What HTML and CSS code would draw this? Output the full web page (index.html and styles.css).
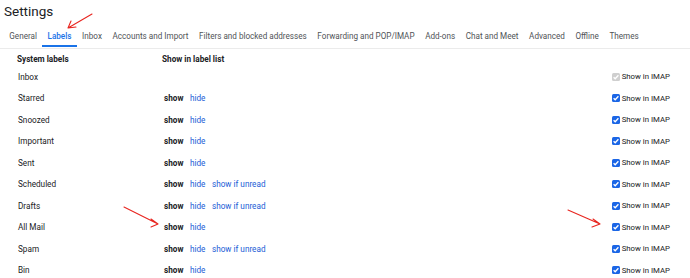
FILE: index.html
```html
<!DOCTYPE html>
<html lang="en">
<head>
  <meta charset="UTF-8" />
  <title>Settings</title>
  <link rel="stylesheet" href="styles.css">
</head>
<body>
  <div class="page">
    <h1 class="title">Settings</h1>

    <nav class="tabs">
      <a class="tab">General</a>
      <a class="tab active">Labels</a>
      <a class="tab">Inbox</a>
      <a class="tab">Accounts and Import</a>
      <a class="tab">Filters and blocked addresses</a>
      <a class="tab">Forwarding and POP/IMAP</a>
      <a class="tab">Add-ons</a>
      <a class="tab">Chat and Meet</a>
      <a class="tab">Advanced</a>
      <a class="tab">Offline</a>
      <a class="tab">Themes</a>
    </nav>

    <div class="labels">
      <div class="labels-head">
        <div class="col-name">System labels</div>
        <div class="col-list">Show in label list</div>
      </div>

      <div class="label-row">
        <div class="col-name">Inbox</div>
        <div class="col-list"></div>
        <label class="imap"><span class="check disabled"><svg viewBox="0 0 8 8"><path d="M1.6 4.2 3.2 5.8 6.4 2.2"/></svg></span>Show in IMAP</label>
      </div>
      <div class="label-row">
        <div class="col-name">Starred</div>
        <div class="col-list"><b>show</b><a>hide</a></div>
        <label class="imap"><span class="check"><svg viewBox="0 0 8 8"><path d="M1.6 4.2 3.2 5.8 6.4 2.2"/></svg></span>Show in IMAP</label>
      </div>
      <div class="label-row">
        <div class="col-name">Snoozed</div>
        <div class="col-list"><b>show</b><a>hide</a></div>
        <label class="imap"><span class="check"><svg viewBox="0 0 8 8"><path d="M1.6 4.2 3.2 5.8 6.4 2.2"/></svg></span>Show in IMAP</label>
      </div>
      <div class="label-row">
        <div class="col-name">Important</div>
        <div class="col-list"><b>show</b><a>hide</a></div>
        <label class="imap"><span class="check"><svg viewBox="0 0 8 8"><path d="M1.6 4.2 3.2 5.8 6.4 2.2"/></svg></span>Show in IMAP</label>
      </div>
      <div class="label-row">
        <div class="col-name">Sent</div>
        <div class="col-list"><b>show</b><a>hide</a></div>
        <label class="imap"><span class="check"><svg viewBox="0 0 8 8"><path d="M1.6 4.2 3.2 5.8 6.4 2.2"/></svg></span>Show in IMAP</label>
      </div>
      <div class="label-row">
        <div class="col-name">Scheduled</div>
        <div class="col-list"><b>show</b><a>hide</a><a>show if unread</a></div>
        <label class="imap"><span class="check"><svg viewBox="0 0 8 8"><path d="M1.6 4.2 3.2 5.8 6.4 2.2"/></svg></span>Show in IMAP</label>
      </div>
      <div class="label-row">
        <div class="col-name">Drafts</div>
        <div class="col-list"><b>show</b><a>hide</a><a>show if unread</a></div>
        <label class="imap"><span class="check"><svg viewBox="0 0 8 8"><path d="M1.6 4.2 3.2 5.8 6.4 2.2"/></svg></span>Show in IMAP</label>
      </div>
      <div class="label-row">
        <div class="col-name">All Mail</div>
        <div class="col-list"><b>show</b><a>hide</a></div>
        <label class="imap"><span class="check"><svg viewBox="0 0 8 8"><path d="M1.6 4.2 3.2 5.8 6.4 2.2"/></svg></span>Show in IMAP</label>
      </div>
      <div class="label-row">
        <div class="col-name">Spam</div>
        <div class="col-list"><b>show</b><a>hide</a><a>show if unread</a></div>
        <label class="imap"><span class="check"><svg viewBox="0 0 8 8"><path d="M1.6 4.2 3.2 5.8 6.4 2.2"/></svg></span>Show in IMAP</label>
      </div>
      <div class="label-row">
        <div class="col-name">Bin</div>
        <div class="col-list"><b>show</b><a>hide</a></div>
        <label class="imap"><span class="check"><svg viewBox="0 0 8 8"><path d="M1.6 4.2 3.2 5.8 6.4 2.2"/></svg></span>Show in IMAP</label>
      </div>
    </div>

    <!-- red annotation arrows drawn over the screenshot -->
    <svg class="marks" viewBox="0 0 690 278">
      <path d="M92 14 L68 28 M68 28 L76 27 M68 28 L71 21"/>
      <path d="M124 207 L158 224 M158 224 L151 219 M158 224 L151 227"/>
      <path d="M568 210 L600 224 M600 224 L593 219 M600 224 L592 227"/>
    </svg>
  </div>
</body>
</html>
```

FILE: styles.css
```css
html, body {
  margin: 0;
  background: #fff;
  color: #202124;
  font-family: Roboto, 'Liberation Sans', sans-serif;
}

.page {
  position: relative;
  width: 690px;
  height: 278px;
  overflow: hidden;
}

.title {
  margin: 0;
  padding: 2px 0 0 4px;
  height: 22px;
  font-size: 13.5px;
  font-weight: 400;
  line-height: 18px;
}

.tabs {
  display: flex;
  padding-left: 4px;
  border-bottom: 1px solid #ebebeb;
  height: 24px;
}

.tab {
  display: flex;
  align-items: center;
  padding: 2px 5.3px 0;
  font-size: 8.15px;
  color: #4f5357;
  border-bottom: 2px solid transparent;
  margin-bottom: 1px;
  white-space: nowrap;
}

.tab.active {
  color: #1a73e8;
  font-weight: 500;
  border-bottom-color: #1a73e8;
}

.labels {
  padding: 3px 20px 0 17px;
  font-size: 8.2px;
}

.labels-head {
  display: flex;
  height: 14px;
  align-items: center;
  font-weight: 700;
}

.label-row {
  display: flex;
  align-items: center;
  height: 21.5px;
}

.col-name {
  width: 145px;
}

.label-row .col-name {
  padding-left: 1px;
  width: 144px;
}

.col-list {
  flex: 1;
  display: flex;
  gap: 6.5px;
}

.label-row .col-list {
  padding-left: 2px;
}

.col-list b {
  font-weight: 700;
}

.col-list a {
  color: #1a5bd6;
}

.imap {
  display: flex;
  align-items: center;
  gap: 2px;
  font-size: 7.8px;
}

.check {
  width: 8px;
  height: 8px;
  border-radius: 1.5px;
  background: #1b66e6;
  display: flex;
}

.check.disabled {
  background: #cfcfcf;
}

.check svg {
  width: 8px;
  height: 8px;
  fill: none;
  stroke: #fff;
  stroke-width: 1.3;
}

.marks {
  position: absolute;
  inset: 0;
  width: 690px;
  height: 278px;
  fill: none;
  stroke: #e8251f;
  stroke-width: 1.1;
  stroke-linecap: round;
}
```
